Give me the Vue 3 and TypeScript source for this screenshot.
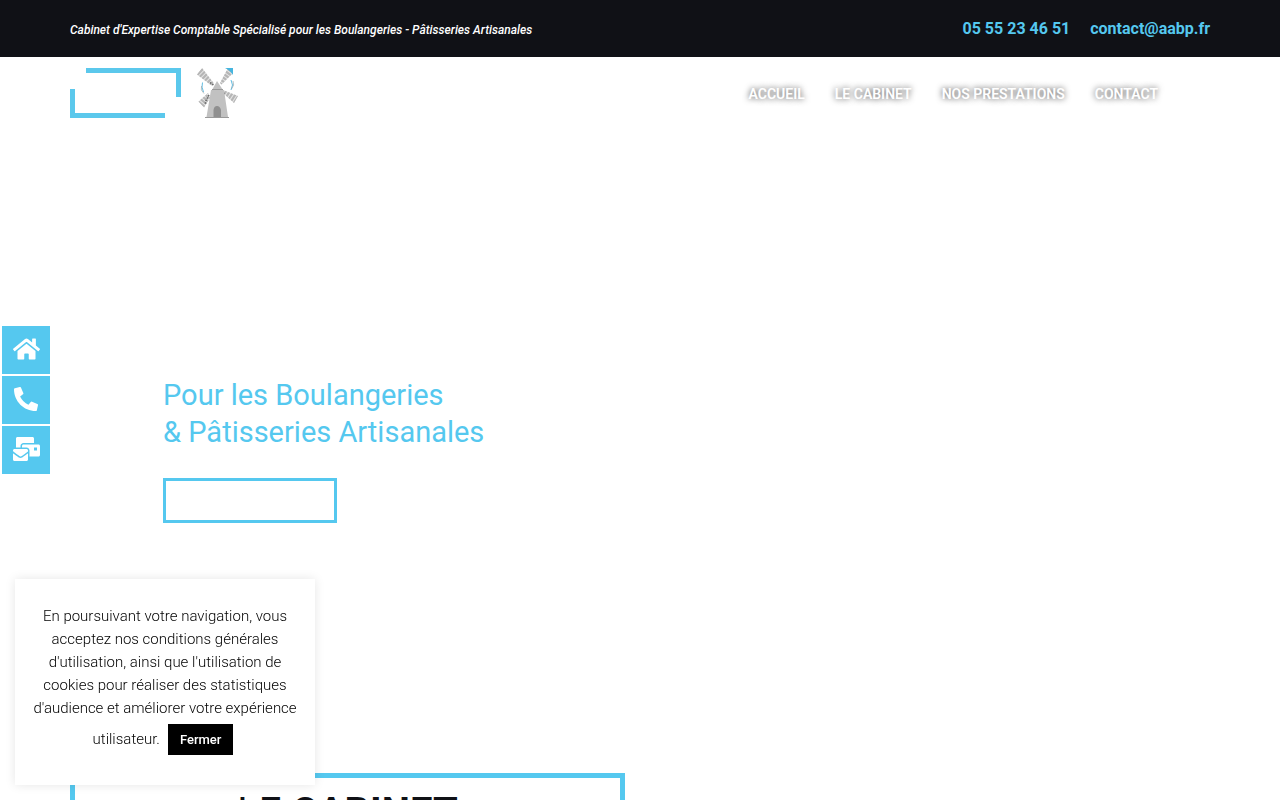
<script setup lang="ts">
interface NavItem {
  label: string
  href: string
}

interface Shortcut {
  name: string
  href: string
  width: number
  path: string
}

const navItems: NavItem[] = [
  { label: 'ACCUEIL', href: '#accueil' },
  { label: 'LE CABINET', href: '#cabinet' },
  { label: 'NOS PRESTATIONS', href: '#prestations' },
  { label: 'CONTACT', href: '#contact' },
]

const shortcuts: Shortcut[] = [
  {
    name: 'Accueil',
    href: '#accueil',
    width: 576,
    path: 'M280.37 148.26L96 300.11V464a16 16 0 0 0 16 16l112.06-.29a16 16 0 0 0 15.92-16V368a16 16 0 0 1 16-16h64a16 16 0 0 1 16 16v95.64a16 16 0 0 0 16 16.05L464 480a16 16 0 0 0 16-16V300L295.67 148.26a12.19 12.19 0 0 0-15.3 0zM571.6 251.47L488 182.56V44.05a12 12 0 0 0-12-12h-56a12 12 0 0 0-12 12v72.61L318.47 43a48 48 0 0 0-61 0L4.34 251.47a12 12 0 0 0-1.6 16.9l25.5 31A12 12 0 0 0 45.15 301l235.22-193.74a12.19 12.19 0 0 1 15.3 0L530.9 301a12 12 0 0 0 16.9-1.6l25.5-31a12 12 0 0 0-1.7-16.93z',
  },
  {
    name: 'Téléphone',
    href: 'tel:0555234651',
    width: 512,
    path: 'M497.39 361.8l-112-48a24 24 0 0 0-28 6.9l-49.6 60.6A370.66 370.66 0 0 1 130.6 204.11l60.6-49.6a23.94 23.94 0 0 0 6.9-28l-48-112A24.16 24.16 0 0 0 122.6.61l-104 24A24 24 0 0 0 0 48c0 256.5 207.9 464 464 464a24 24 0 0 0 23.4-18.6l24-104a24.29 24.29 0 0 0-14.01-27.6z',
  },
  {
    name: 'Courriel',
    href: 'mailto:contact@aabp.fr',
    width: 576,
    path: 'M160 448c-25.6 0-51.2-22.4-64-32-64-44.8-83.2-60.8-96-70.4V480c0 17.67 14.33 32 32 32h256c17.67 0 32-14.33 32-32V345.6c-12.8 9.6-32 25.6-96 70.4-12.8 9.6-38.4 32-64 32zm128-192H32c-17.67 0-32 14.33-32 32v16c25.6 19.2 22.4 19.2 115.2 86.4 9.6 6.4 28.8 25.6 44.8 25.6s35.2-19.2 44.8-22.4c92.8-67.2 89.6-67.2 115.2-86.4V288c0-17.67-14.33-32-32-32zm256-96H224c-17.67 0-32 14.33-32 32v32h96c33.21 0 60.59 25.42 63.71 57.82l.29-.22V416h192c17.67 0 32-14.33 32-32V192c0-17.67-14.33-32-32-32zm-32 128h-64v-64h64v64zm-352-96c0-35.29 28.71-64 64-64h224V32c0-17.67-14.33-32-32-32H96C78.33 0 64 14.33 64 32v192h96v-32z',
  },
]

</script>

<template>
  <div class="page">
    <header>
      <div class="topbar">
        <div class="container topbar-row">
          <em class="tagline">Cabinet d'Expertise Comptable Spécialisé pour les Boulangeries - Pâtisseries Artisanales</em>
          <div class="contacts">
            <a href="tel:0555234651">05 55 23 46 51</a>
            <a href="mailto:contact@aabp.fr">contact@aabp.fr</a>
          </div>
        </div>
      </div>
      <div class="container menu-row">
        <a class="logo" href="#accueil" aria-label="AABP">
          <svg width="168" height="50" viewBox="0 0 168 50" aria-hidden="true">
            <defs>
              <clipPath id="blades">
                <path d="M132 0L127 6.500L142 18L144 15.500zM158 0L150 15L151.500 16.500L163 5V0zM168 28L153 22L154 26L164 35zM128.500 33.500L138 25L140 30L134 39.500z" />
              </clipPath>
            </defs>
            <path d="M16 2.500H108.500V29M2.500 21V47.500H95" fill="none" stroke="#5bc8ec" stroke-width="5" />
            <g clip-path="url(#blades)">
              <path d="M125 0H168V42H125z" fill="#e6e6e6" />
              <g stroke="#b6b6b6" stroke-width="10" stroke-dasharray="2.200 1" fill="none">
                <path d="M129.500 3L144 17M161 2L150 17M167 32L152 22M131 37L140 26" />
              </g>
            </g>
            <path d="M140 14.500L143.500 17M152 23L154.500 26M139 27L135.500 33.500V37" fill="none" stroke="#666" stroke-width="1.500" stroke-dasharray="1.500 1.200" />
            <path d="M155 0H163V7Q160 2 155 0z" fill="#45b5df" />
            <path d="M132.500 14.500Q131 19 133.500 24M161 12Q164 17 161 22" fill="none" stroke="#62bde2" />
            <path d="M131.500 18Q130 22 134 25.500M163 13Q165 17 161.500 21" fill="none" stroke="#9aa6aa" stroke-width=".7" />
            <path d="M147 13L153 22H154L158 49H136.500L141 22H142z" fill="#c1c1c1" />
            <path d="M142 21.500H153" stroke="#999" />
            <path d="M143.500 49V42Q144 38 147 38Q150 38 151 42V49z" fill="#8f8f8f" />
            <path d="M135 49.500H159" stroke="#999" />
          </svg>
        </a>
        <nav class="menu" aria-label="Menu principal">
          <a v-for="item in navItems" :key="item.label" :href="item.href">{{ item.label }}</a>
        </nav>
      </div>
    </header>

    <main>
      <section id="accueil" class="hero container">
        <p class="hero-text">Pour les Boulangeries<br />&amp; Pâtisseries Artisanales</p>
        <button class="hero-button" type="button"></button>
      </section>
      <section id="cabinet" class="container">
        <div class="cabinet-frame">
          <h2><span>LE</span> CABINET</h2>
        </div>
      </section>
    </main>

    <aside class="shortcuts">
      <a v-for="item in shortcuts" :key="item.name" :href="item.href" :aria-label="item.name">
        <svg height="24" :viewBox="`0 0 ${item.width} 512`" aria-hidden="true"><path :d="item.path" /></svg>
      </a>
    </aside>

    <div class="cookie">
      <span>En poursuivant votre navigation, vous acceptez nos conditions générales d'utilisation, ainsi que l'utilisation de cookies pour réaliser des statistiques d'audience et améliorer votre expérience utilisateur.</span>
      <button type="button">Fermer</button>
    </div>
  </div>
</template>

<style>
body {
  margin: 0;
}
</style>

<style scoped>
.page {
  height: 100vh;
  overflow: hidden;
  background: #fff;
  font-family: Roboto, "Liberation Sans", sans-serif;
  color: #101116;
}
a {
  text-decoration: none;
}
.container {
  max-width: 1140px;
  margin: 0 auto;
}
.topbar {
  background: #101116;
}
.topbar-row {
  display: flex;
  align-items: center;
  justify-content: space-between;
  height: 57px;
}
.tagline {
  color: #fff;
  font-size: 12px;
  font-weight: 500;
  line-height: 20px;
  padding-top: 2px;
}
.contacts {
  display: flex;
  gap: 20px;
  font-size: 16px;
  font-weight: 700;
}
.contacts a {
  color: #55c8ef;
}
.menu-row {
  display: flex;
  justify-content: space-between;
  align-items: center;
  height: 72px;
}
.logo,
.logo svg {
  display: block;
}
.menu {
  display: flex;
  gap: 30px;
  margin-right: 52px;
  padding-top: 2px;
}
.menu a {
  color: #fff;
  font-size: 14px;
  font-weight: 600;
  line-height: 18px;
  text-shadow: 0 0 6px rgba(0, 0, 0, 0.75);
}
.hero {
  box-sizing: border-box;
  height: 644px;
  padding: 248px 93px 0;
}
.hero-text {
  margin: 0 0 27px;
  color: #55c8ef;
  font-size: 29px;
  line-height: 37px;
}
.hero-button {
  display: block;
  width: 174px;
  height: 45px;
  border: 3px solid #55c8ef;
  background: transparent;
}
.cabinet-frame {
  box-sizing: border-box;
  width: 555px;
  max-width: 100%;
  border: 5px solid #55c8ef;
  padding: 10px 20px;
  text-align: center;
}
h2 {
  margin: 0;
  font-size: 40px;
  font-weight: 700;
  line-height: 50px;
}
h2 span {
  font-weight: 400;
}
.shortcuts {
  position: fixed;
  top: 50%;
  left: 2px;
  display: grid;
  gap: 2px;
  transform: translateY(-50%);
}
.shortcuts a {
  box-sizing: border-box;
  display: flex;
  align-items: center;
  justify-content: center;
  width: 48px;
  height: 48px;
  padding-bottom: 2px;
  background: #55c8ef;
}
.shortcuts svg {
  fill: #fff;
}
.cookie {
  position: fixed;
  left: 15px;
  bottom: 15px;
  box-sizing: border-box;
  width: 300px;
  padding: 26px 15px 30px;
  background: #fff;
  box-shadow: 0 0 10px rgba(0, 0, 0, 0.1);
  color: #000;
  font-size: 15px;
  font-weight: 300;
  line-height: 23px;
  text-align: center;
}
.cookie button {
  margin: 4px 4px 0 5px;
  padding: 8px 12px;
  border: 0;
  background: #000;
  color: #fff;
  font-family: inherit;
  font-size: 13px;
  font-weight: 500;
  line-height: 15px;
}
.cookie span {
  margin-right: 3px;
}
</style>
